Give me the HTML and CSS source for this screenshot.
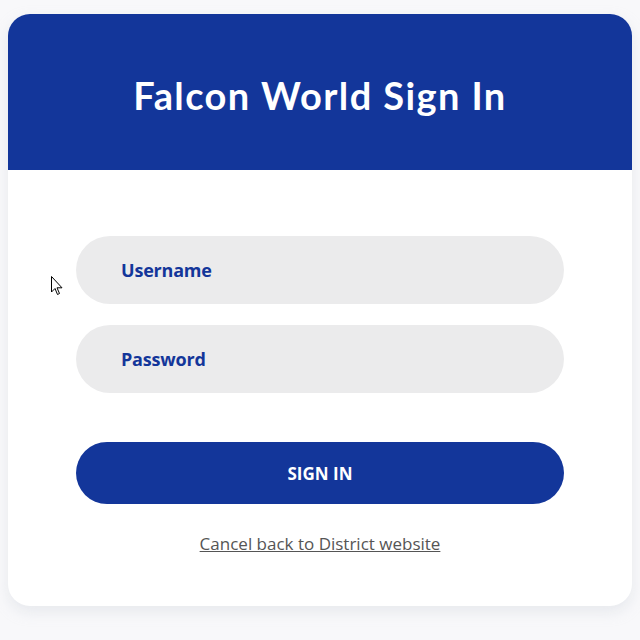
FILE: index.html
```html
<!DOCTYPE html>
<html>
<head>
<meta charset="utf-8">
<link rel="stylesheet" href="styles.css">
</head>
<body>
<div class="card">
  <div class="header"><h1 class="title">Falcon World Sign In</h1></div>
  <form class="form">
    <div class="field">Username</div>
    <div class="field">Password</div>
    <button class="btn" type="button">SIGN IN</button>
    <a class="cancel" href="#">Cancel back to District website</a>
  </form>
</div>
<svg class="cursor" width="13" height="20" viewBox="0 0 13 20"><path d="M0.5 0.5 L0.5 16 L4 12.5 L6.5 18.5 L8.5 17.5 L6 11.8 L11 11.8 Z" fill="#fff" stroke="#000" stroke-width="1"/></svg>
</body>
</html>
```
FILE: styles.css
```css
html, body { margin: 0; padding: 0; }
body {
  background: #f8f8fa;
  font-family: "Open Sans", "Noto Sans", sans-serif;
  width: 640px; height: 640px; overflow: hidden;
  position: relative;
}
.card {
  margin: 14px 8px 0 8px;
  width: 624px;
  height: 592px;
  background: #fff;
  border-radius: 22px;
  overflow: hidden;
  box-shadow: 0 6px 14px rgba(200,205,215,0.35);
}
.header {
  background: #13369a;
  height: 156px;
  display: flex;
  align-items: center;
  justify-content: center;
}
.title {
  margin: 0;
  color: #fff;
  font-family: "Lato", sans-serif;
  font-weight: 700;
  font-size: 38px;
  letter-spacing: 1.4px;
  padding-top: 5px;
}
.form {
  display: flex;
  flex-direction: column;
  align-items: center;
  padding-top: 66px;
}
.field {
  width: 488px;
  height: 68px;
  box-sizing: border-box;
  border-radius: 34px;
  background: #ebebec;
  color: #13369a;
  font-weight: 700;
  font-size: 18px;
  letter-spacing: -0.2px;
  display: flex;
  align-items: center;
  padding-left: 45px;
  margin-bottom: 21px;
}
.btn {
  margin-top: 28px;
  width: 488px;
  height: 62px;
  border: none;
  border-radius: 31px;
  background: #13369a;
  color: #fff;
  font-family: inherit;
  font-weight: 700;
  font-size: 17px;
}
.cancel {
  margin-top: 28px;
  color: #555;
  font-size: 17px;
  text-decoration: underline;
}
.cursor {
  position: absolute;
  left: 51px;
  top: 276px;
}
```
